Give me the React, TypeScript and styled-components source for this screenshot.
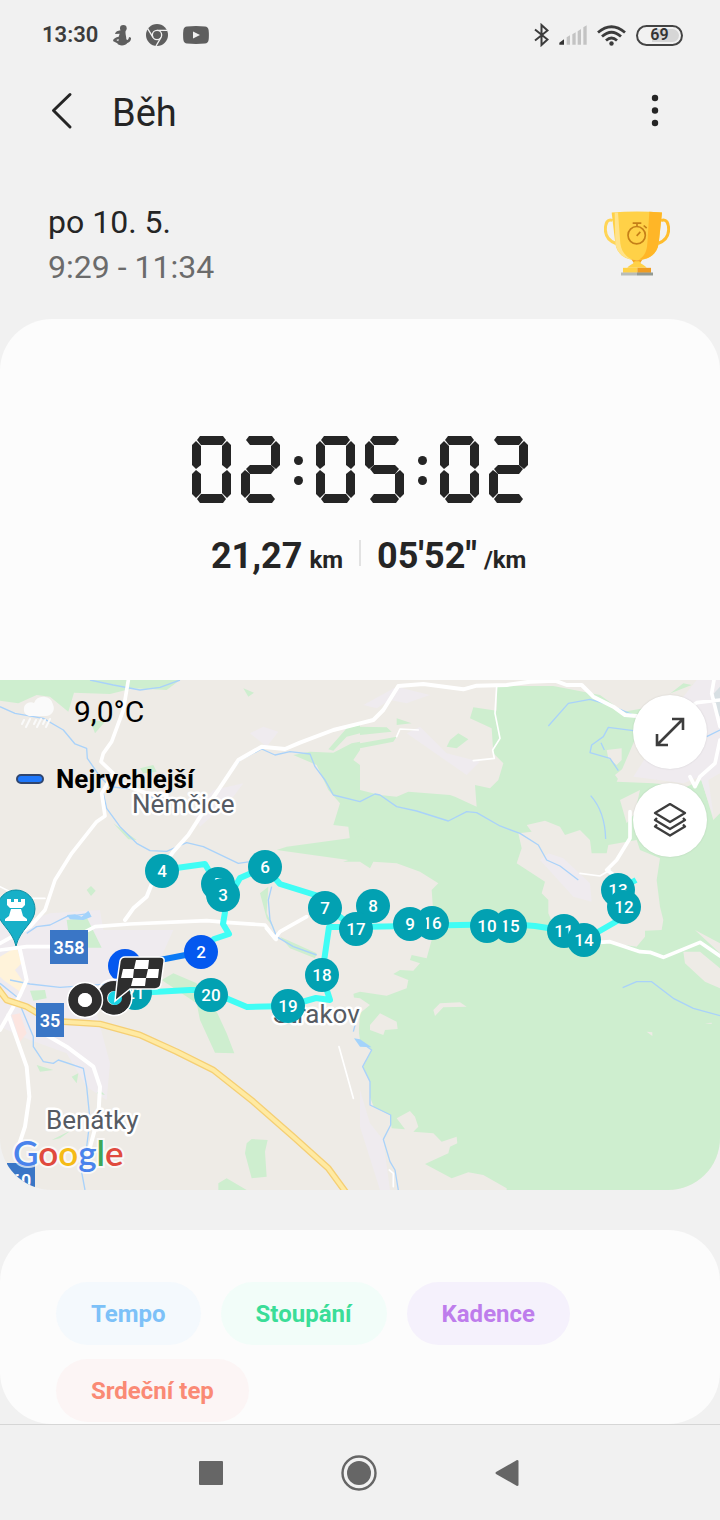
import React from "react";
import styled, { createGlobalStyle } from "styled-components";

const GlobalStyle = createGlobalStyle`
  *, *::before, *::after { box-sizing: border-box; }
  body {
    margin: 0;
    background: #f1f1f1;
    color: #252525;
    font-family: Roboto, "Liberation Sans", sans-serif;
  }
  button { font: inherit; color: inherit; border: 0; padding: 0; cursor: pointer; background: none; }
  svg { display: block; }
`;

const Screen = styled.div`
  min-height: 100vh;
  display: flex;
  flex-direction: column;
`;

/* ---------- status bar ---------- */

const StatusBar = styled.div`
  display: flex;
  align-items: center;
  justify-content: space-between;
  height: 70px;
  padding: 0 37px 0 42px;
`;

const StatusGroup = styled.div<{ $gap: number }>`
  display: flex;
  align-items: center;
  gap: ${(p) => p.$gap}px;
`;

const StatusTime = styled.span`
  font-size: 22px;
  line-height: 28px;
  font-weight: 600;
  color: #3c3c3c;
`;

const Battery = styled.span`
  width: 47px;
  height: 21px;
  border: 2px solid #444;
  border-radius: 11px;
  padding: 2px;
  display: flex;
`;

const BatteryLevel = styled.span`
  flex: 1;
  border-radius: 7px;
  background: linear-gradient(90deg, #f1f1f1 30%, #d6d6d6 30%);
  display: flex;
  align-items: center;
  justify-content: center;
  font-size: 16px;
  line-height: 14px;
  font-weight: 600;
  color: #333;
`;

function AssistantIcon() {
  return (
    <svg width="18" height="21" viewBox="0 0 54 63" fill="#5e5e5e" aria-hidden="true">
      <circle cx="31" cy="10" r="10" />
      <path d="M22 16 38 17C36 25 40 34 40 42C42 48 47 44 48 36L54 38C55 48 48 52 43 54C38 64 15 63 13 55L1 49C-2 43 8 36 17 35L20 26 6 27C7 20 15 17 22 16ZM10 45 16 49 17 42Z" fillRule="evenodd" />
    </svg>
  );
}

function ChromeIcon() {
  return (
    <svg width="22" height="22" viewBox="0 0 66 66" aria-hidden="true">
      <circle cx="33" cy="33" r="33" fill="#5e5e5e" />
      <g fill="none" stroke="#f1f1f1" strokeWidth="4">
        <circle cx="33" cy="33" r="14" />
        <path d="M33 19H64M21 40 5 14M45 40 30 66" />
      </g>
    </svg>
  );
}

function VideoIcon() {
  return (
    <svg width="26" height="18" viewBox="0 0 26 18" aria-hidden="true">
      <path d="M4 0.4Q13-.4 22 .4Q25 .6 25.6 4Q26.2 9 25.6 14Q25 17.4 22 17.6Q13 18.4 4 17.6Q1 17.4.4 14Q-.2 9 .4 4Q1 .6 4 .4Z" fill="#5e5e5e" />
      <path d="M10 5.500 17 9 10 12.500Z" fill="#f1f1f1" />
    </svg>
  );
}

function BluetoothIcon() {
  return (
    <svg width="15" height="24" viewBox="0 0 15 24" fill="none" stroke="#3c3c3c" strokeWidth="2" aria-hidden="true">
      <path d="M1 6.500 13.500 16.500 7.500 22V2L13.500 7.500 1 17.500" />
    </svg>
  );
}

function SignalIcon() {
  return (
    <svg width="28" height="20" viewBox="0 0 84 60" aria-hidden="true">
      <path d="M1 59V53L15 43V59Z" fill="#333" />
      <path d="M23 59V37L33 31V59ZM40 59V28L50 22V59ZM56 59V19L66 12V59ZM73 59V7L83 1V59Z" fill="#c3c3c3" />
    </svg>
  );
}

function WifiIcon() {
  return (
    <svg width="29" height="21" viewBox="0 0 29 21" fill="none" stroke="#3c3c3c" strokeWidth="2.800" aria-hidden="true">
      <path d="M1 7.500Q14.500-4 28 7.500M5 11.500Q14.500 3 24 11.500M9 15.500Q14.500 10.500 20 15.500" />
      <circle cx="14.500" cy="18.500" r="2.200" fill="#3c3c3c" stroke="none" />
    </svg>
  );
}

/* ---------- title bar ---------- */

const TitleBar = styled.header`
  display: flex;
  align-items: center;
  height: 82px;
  padding: 0 48px 0 45px;
`;

const IconButton = styled.button`
  display: flex;
  align-items: center;
  justify-content: center;
  width: 34px;
  height: 44px;
`;

const Title = styled.h1`
  flex: 1;
  margin: 0 0 0 33px;
  padding-top: 4px;
  font-size: 38px;
  line-height: 44px;
  font-weight: 400;
`;

/* ---------- activity summary ---------- */

const Summary = styled.section`
  display: flex;
  align-items: center;
  justify-content: space-between;
  padding: 48px 50px 29px 48px;
`;

const SummaryLine = styled.p<{ $muted?: boolean }>`
  margin: 0;
  font-size: 32px;
  line-height: 45px;
  color: ${(p) => (p.$muted ? "#6b6b6b" : "#252525")};
`;

function Trophy() {
  return (
    <svg width="66" height="68" viewBox="42 47 198 203" role="img" aria-label="Trofej">
      <g fill="none" strokeWidth="9">
        <path d="M68 75C52 68 46 84 46 103C47 126 60 138 78 144" stroke="#ffd557" />
        <path d="M213 75C230 68 236 84 236 103C235 126 222 138 204 144" stroke="#ffbd2d" />
      </g>
      <path d="M65 51Q141 45 216 51L206 144C202 174 178 194 141 194C104 194 80 174 76 144Z" fill="#ffd147" />
      <path d="M74 51 84 51 91 144C94 168 108 184 126 192C98 188 80 170 76 144Z" fill="#ffe38a" />
      <path d="M178 49 216 51 206 144C202 174 178 192 146 193C172 176 171 158 173 130Z" fill="#ffb627" />
      <path d="M124 191Q141 197 158 191L149 205H133Z" fill="#f5a623" />
      <path d="M112 217C118 207 130 207 134 197H148C152 207 164 207 170 217Z" fill="#ffd147" />
      <path d="M99 217H142V232H99Z" fill="#ffd147" />
      <path d="M142 217H183V232H142Z" fill="#ef9c22" />
      <path d="M93 231H141V240H93Z" fill="#b9bdb8" />
      <path d="M141 231H189V240H141Z" fill="#939a93" />
      <g fill="none" stroke="#c57f18" strokeWidth="5">
        <circle cx="140" cy="119" r="26" />
        <path d="M128 83H154M161 90 170 98M140 121 151 109M141 84V92" />
      </g>
    </svg>
  );
}

/* ---------- result card ---------- */

const ResultCard = styled.section`
  background: #fcfcfc;
  border-radius: 52px 52px 0 0;
  padding: 117px 24px 103px;
  display: flex;
  flex-direction: column;
  align-items: stretch;
  gap: 32px;
`;

const Clock = styled.div`
  display: flex;
  justify-content: center;
  gap: 10px;
`;

const Digit = styled.span`
  display: grid;
  width: 39px;
  height: 67px;
`;

const SEGMENTS: Record<string, string> = {
  a: "5px 4px, 8px 0, 31px 0, 34px 4px, 30px 9px, 9px 9px",
  b: "35px 5px, 39px 9px, 39px 29px, 35px 33px, 30px 29px, 30px 10px",
  c: "35px 34px, 39px 38px, 39px 58px, 35px 62px, 30px 57px, 30px 38px",
  d: "9px 58px, 30px 58px, 34px 63px, 31px 67px, 8px 67px, 5px 63px",
  e: "4px 34px, 9px 38px, 9px 57px, 4px 62px, 0 58px, 0 38px",
  f: "4px 5px, 9px 10px, 9px 29px, 4px 33px, 0 29px, 0 9px",
  g: "5px 33px, 9px 29px, 30px 29px, 34px 33px, 30px 38px, 9px 38px",
};

const LIT: Record<string, string> = {
  "0": "abcdef",
  "2": "abged",
  "5": "afgcd",
};

const Segment = styled.span<{ $shape: string }>`
  grid-area: 1 / 1;
  background: #252525;
  clip-path: polygon(${(p) => p.$shape});
`;

const Colon = styled.span`
  width: 16px;
  display: flex;
  flex-direction: column;
  align-items: center;
  justify-content: center;
  gap: 11px;
  padding-top: 1px;
  &::before, &::after {
    content: "";
    width: 9px;
    height: 9px;
    border-radius: 50%;
    background: #252525;
  }
`;

function SegmentClock({ value }: { value: string }) {
  return (
    <Clock role="img" aria-label={value}>
      {value.split("").map((ch, i) =>
        ch === ":" ? (
          <Colon key={i} />
        ) : (
          <Digit key={i}>
            {LIT[ch].split("").map((s) => (
              <Segment key={s} $shape={SEGMENTS[s]} />
            ))}
          </Digit>
        )
      )}
    </Clock>
  );
}

const Stats = styled.div`
  display: grid;
  grid-template-columns: 1fr 2px 1fr;
  column-gap: 16px;
  align-items: start;
`;

const Stat = styled.p<{ $align: "left" | "right" }>`
  margin: 0;
  text-align: ${(p) => p.$align};
  font-size: 36px;
  line-height: 42px;
  font-weight: 700;
`;

const Unit = styled.span`
  margin-left: 7px;
  font-size: 24px;
  line-height: 28px;
`;

const StatDivider = styled.span`
  height: 26px;
  margin-top: 5px;
  background: #e2e2e2;
`;

/* ---------- map ---------- */

const MapCard = styled.section`
  position: relative;
  overflow: hidden;
  border-radius: 0 0 52px 52px;
  background: #eeebe6;
`;

const MapDrawing = styled.svg`
  width: 100%;
  height: auto;
  font-family: Roboto, "Liberation Sans", sans-serif;
`;

const MapInfo = styled.div`
  position: absolute;
  top: 14px;
  left: 16px;
`;

const Weather = styled.div`
  display: flex;
  align-items: center;
  gap: 19px;
  padding-left: 5px;
  font-size: 30px;
  line-height: 36px;
  color: #000;
`;

const Legend = styled.div`
  display: flex;
  align-items: center;
  gap: 12px;
  margin-top: 34px;
  font-size: 26px;
  line-height: 30px;
  font-weight: 700;
  color: #000;
`;

const LegendSwatch = styled.span`
  width: 28px;
  height: 10px;
  border: 2px solid #30466f;
  border-radius: 5px;
  background: #1f78fb;
`;

const MapControls = styled.div`
  position: absolute;
  top: 15px;
  right: 13px;
  display: flex;
  flex-direction: column;
  gap: 14px;
`;

const RoundButton = styled.button`
  width: 74px;
  height: 74px;
  border-radius: 50%;
  background: #fff;
  display: flex;
  align-items: center;
  justify-content: center;
  box-shadow: 0 0 2px rgba(0, 0, 0, 0.12);
`;

const TEAL = "#02a1b2";
const BLUE = "#0458ef";

const MARKERS: { n: number; x: number; y: number; color?: string }[] = [
  { n: 21, x: 135, y: 313 },
  { n: 20, x: 211, y: 315 },
  { n: 19, x: 288, y: 326 },
  { n: 18, x: 322, y: 295 },
  { n: 8, x: 373, y: 226 },
  { n: 17, x: 356, y: 249 },
  { n: 16, x: 432, y: 243 },
  { n: 15, x: 510, y: 246 },
  { n: 13, x: 618, y: 210 },
  { n: 12, x: 624, y: 227 },
  { n: 11, x: 564, y: 251 },
  { n: 14, x: 584, y: 260 },
  { n: 10, x: 487, y: 246 },
  { n: 9, x: 410, y: 244 },
  { n: 7, x: 325, y: 228 },
  { n: 6, x: 265, y: 187 },
  { n: 5, x: 218, y: 204 },
  { n: 4, x: 162, y: 191 },
  { n: 3, x: 223, y: 215 },
  { n: 2, x: 201, y: 272, color: BLUE },
  { n: 1, x: 125, y: 286, color: BLUE },
];

/* Land use, water and roads, drawn on a grid three times finer than the map. */
function Terrain() {
  return (
    <g transform="scale(0.33333)">
      <path
        fill="#efebef"
        d="M0 690 90 720 150 700 300 690 310 750H520L480 840 330 950 290 1000 330 1150 320 1260 260 1220 200 1120 90 1080 0 1040ZM750 160 790 140 835 155 800 200ZM580 400 640 330 730 310 700 350 600 440ZM1090 75 1190 20 1290 45 1220 70 1170 60 1130 85ZM1220 160 1260 140 1340 220 1440 245 1400 285Z"
      />
      <path fill="#fff3da" d="M0 830 50 800 65 850 45 870 80 920 60 935 10 900 0 890Z" />
      <path fill="#fce5e0" d="M35 1005 60 1000 80 1060 60 1085Z" />
      <g fill="#ceeecf">
        <path d="M0 0H540L500 30 400 25 330 42 222 38 205 95 150 50 110 45 55 70 0 62Z" />
        <path d="M730 25 762 38 745 50ZM270 120 315 125 285 160ZM420 265 460 255 470 275 430 280ZM340 430 410 480 385 478ZM260 630 273 618 287 632 273 648ZM200 720 260 712 305 803 265 803 245 760 205 755Z" />
        <path d="M985 208 1040 145 1080 135V160L1040 170 1000 212ZM780 640 805 620 800 700 825 750 800 715Z" />
        <path d="M880 225 930 215 1000 218 1055 190 1080 185V210L1060 240 1080 255V310L1080 330 1140 345 1190 350 1225 335 1350 345 1365 350 1430 380 1425 315 1470 325 1495 300 1510 250 1480 220 1475 145 1410 115 1420 82 1490 92V18H1660L1800 45 1870 95 1960 80 2050 10 2075 15 2160 0V1530H1180L1160 1380 1090 1200 1080 1080 1060 940 1030 735 1030 545 1045 540 1050 480 1045 440 1000 435 1020 370 985 330 950 255Z" />
        <path d="M830 510 860 500 1080 470 1140 500V545L1045 540ZM1190 115 1235 130 1190 135ZM1080 140 1160 142 1175 155 1080 165ZM1080 190 1190 170 1180 185 1080 205ZM1340 200 1350 180 1375 160 1405 178 1370 205Z" />
        <path d="M90 932 135 930 140 955 100 962ZM485 900 520 880 590 910 600 950 650 995 680 1060 703 1120 645 1118 600 1020 590 970ZM840 770 950 820 945 835 870 805ZM740 1390 755 1377 803 1380 795 1415 800 1490 755 1495 735 1420ZM655 1510 680 1495 740 1530H655ZM110 1155 160 1170 120 1175ZM215 1190 235 1180 230 1210ZM155 1380 215 1350 180 1375ZM290 1240 300 1230 315 1245ZM1015 1000 1055 1050 1050 1100 1020 1040Z" />
      </g>
      <g fill="#eeebe6">
        <path d="M1000 545H1080L1110 565 1120 545 1190 550 1260 575 1315 610 1295 630 1300 700 1295 780 1280 835 1235 825 1230 840 1260 850 1240 872 1200 870 1180 882 1225 900 1220 925 1160 947 1080 935 1000 960Z" />
        <path d="M1000 945 1080 955 1110 975 1080 1000 1075 1075 1115 1110 1090 1160 1110 1205 1110 1275 1170 1305 1175 1345 1215 1348 1190 1315 1230 1293 1245 1310 1255 1340 1240 1355 1300 1360 1325 1385 1370 1370 1372 1390 1350 1400 1345 1420 1275 1452 1355 1495 1405 1477 1450 1485 1520 1525V1530H1000Z" />
        <path d="M1580 435 1635 422 1680 440 1695 465 1740 450 1770 480 1775 520 1820 520 1825 495 1910 480 1920 510 1980 535 1970 600 1980 680 1990 720 1985 750 1935 752 1935 770 1910 800 1840 790 1680 780 1645 700V660L1625 640 1635 605 1550 550 1565 505 1555 460 1595 455Z" />
        <path d="M2075 15 2160 0V400L2140 420 2105 300 2060 320 1960 310 1850 305 1900 190 1960 60ZM1820 210 1865 205V240L1850 255 1825 235ZM1845 285 1900 240 1890 280 1860 305ZM1860 360 1920 330 1905 400 1880 430Z" />
        <path d="M2050 815H2100L2160 865V925L2115 905 2055 850ZM2085 750 2160 790V820ZM1110 1035 1140 1000 1190 1025 1193 1047 1155 1050 1150 1065 1110 1050ZM1300 990 1320 970 1380 967 1400 980 1330 982 1305 1008ZM1940 1055 1957 1057V1068ZM2115 1030 2135 1028V1032Z" />
      </g>
      <path
        fill="#efebef"
        d="M2090 0H2160V280L2125 300 2142 415 2120 350 2100 290 2050 310 1900 290 1990 150 2050 50ZM1645 520 1690 535 1770 610 1775 665 1720 650 1620 540ZM1080 1230 1110 1330 1150 1380 1170 1530H1140L1080 1340Z"
      />
      <path fill="#d7dfe3" d="M2142 40 2160 20V110L2145 90Z" />

      <g fill="none" stroke="#a9d2fa" strokeWidth="4" strokeLinejoin="round">
        <path d="M270 0 340 15 420 30 480 22 540 0M0 80 45 100 130 115 190 150 225 192 260 205 262 235 300 290 330 320 420 330 460 355M310 340 320 385 360 440 410 490 450 512 500 514 560 488 610 500 715 550 750 545" />
        <path d="M660 320 720 240 785 207 825 225 870 215 930 222 945 260 975 300 1000 345 1080 365 1125 342 1140 345 1190 380 1250 393 1345 423 1400 395 1430 398 1500 438 1560 460 1615 495 1640 540 1680 558 1735 600" />
        <path d="M1645 138 1705 70 1770 58 1830 75 1900 105M1900 152 1825 142 1810 170 1775 195 1770 218 1830 235 1855 272M1803 188 1813 210M1772 347Q1815 395 1817 477M2120 170 2160 150" />
        <path d="M80 760 110 740 150 735 200 710 270 700M30 900 90 912 180 922 350 910M0 910 50 950 100 1070 100 1100 130 1145 160 1150 175 1140 250 1165 260 1220 270 1320 260 1400 240 1450 255 1530M815 620 805 660 810 720 830 770 880 800 950 825" />
        <path d="M1080 980 1060 1055M1080 1085 1115 1110 1088 1160 1110 1205 1110 1275 1172 1305V1335L1150 1378 1170 1445 1185 1470 1195 1530M1868 923 1910 905H1955L2020 955 2080 985 2160 1007" />
      </g>
      <path fill="#a3d3fb" d="M1062 1075 1080 1078 1115 1102 1080 1100ZM200 705 225 703 245 710 265 692 275 710 250 720 210 718Z" />

      <g fill="none" stroke="#fff" strokeLinejoin="round" strokeLinecap="round">
        <path strokeWidth="11" d="M385 0 370 90 335 185 310 220 303 245 340 280 305 340 315 408 290 425 215 520 165 600 135 690 90 740 0 790" />
        <path strokeWidth="12" d="M360 310 440 340 500 345M375 720 400 685 440 650 460 600 520 515 565 465 620 380 655 330 715 240 785 200 855 207 900 188 1000 150 1080 130 1120 120 1150 90 1195 18 1270 12 1390 28 1430 17 1520 15 1590 5 1665 2 1700 15 1745 15 1780 50 1840 80 1875 105 1910 108" />
        <path strokeWidth="11" d="M0 810 80 800 170 800 285 740 390 732 620 722 690 728 795 735 825 775 840 755 920 710M1890 395V475L1850 540 1820 570 1850 590M2070 290 2085 320 2100 290 2145 250 2160 180M2160 60 2090 68 2050 95M2142 0 2135 40 2160 140M1760 790 1830 785 1920 815 1950 817 1990 832 2100 787 2160 828" />
        <path strokeWidth="12" d="M60 810 80 900 60 945 0 1050M25 1005 80 1160 88 1250 75 1340 55 1400M130 1060 200 1100 280 1160 300 1220 295 1310 265 1420M800 745 828 778" />
        <path strokeWidth="5" d="M1490 20 1485 100 1500 175 1478 210 1483 235 1420 242M1190 170 1200 147 1255 150M1740 580 1800 588 1830 570M0 620 70 655 135 655M1017 1100 1060 1255M1168 1470 1180 1480V1520" />
      </g>
      <g fill="none" strokeLinejoin="round">
        <path stroke="#f5cf74" strokeWidth="20" d="M-10 920 20 960 80 980 130 1010 190 1025 300 1032 420 1065 530 1115 640 1170 760 1265 880 1370 985 1465 1040 1540" />
        <path stroke="#ffeaa2" strokeWidth="12" d="M-10 920 20 960 80 980 130 1010 190 1025 300 1032 420 1065 530 1115 640 1170 760 1265 880 1370 985 1465 1040 1540" />
      </g>
    </g>
  );
}

function RoadShield({ x, y, width, label }: { x: number; y: number; width: number; label: string }) {
  return (
    <g>
      <rect x={x} y={y} width={width} height="34" fill="#3a76c6" />
      <text x={x + width / 2} y={y + 24} textAnchor="middle" fontSize="18" fontWeight="600" fill="#fff">
        {label}
      </text>
    </g>
  );
}

function PlaceName({ x, y, children }: { x: number; y: number; children: string }) {
  return (
    <text x={x} y={y} fontSize="26" fill="#565b63" stroke="#fff" strokeWidth="5" strokeLinejoin="round" paintOrder="stroke">
      {children}
    </text>
  );
}

function RouteMap() {
  return (
    <MapDrawing viewBox="0 0 720 510" role="img" aria-label="Mapa trasy">
      <Terrain />
      <PlaceName x={132} y={133}>Němčice</PlaceName>
      <PlaceName x={273} y={343}>Strakov</PlaceName>
      <PlaceName x={46} y={449}>Benátky</PlaceName>
      <RoadShield x={50} y={250} width={38} label="358" />
      <RoadShield x={36} y={323} width={28} label="35" />
      <path d="M7 483H35V507H7Z" fill="#3a76c6" />
      <text x="21" y="507" textAnchor="middle" fontSize="18" fontWeight="600" fill="#fff">60</text>

      <g stroke="#0d8fa3">
        <path d="M16 266C12 249-3 243-3 229A19 19 0 0 1 35 229C35 243 20 249 16 266Z" fill="#17b0c8" />
      </g>
      <path d="M7 219H11V222H14V219H18V222H21V219H25V225L22 228H10L7 225ZM11 229H21L23 236 27 239V241H5V239L9 236Z" fill="#fff" />

      <g fill="none" stroke="#40fdf5" strokeWidth="6" strokeLinejoin="round">
        <path d="M162 190 205 184 212 196 223 215 225 232 223 244 229 254 214 259 201 272M223 215 232 212 240 198 265 187 280 204 325 218 328 228 340 237 356 249" />
        <path d="M356 247 410 246 510 244 535 246 548 248 584 260 624 237 618 210 636 200M356 247H329L322 295 330 320 316 318 288 326 247 327 228 319 211 310 190 310 135 313" />
      </g>
      <path d="M125 286 165 279 201 272" fill="none" stroke="#0b7af5" strokeWidth="6" />

      {MARKERS.map((m) => (
        <g key={m.n}>
          <circle cx={m.x} cy={m.y} r="17" fill={m.color ?? TEAL} />
          <text x={m.x} y={m.y + 6} textAnchor="middle" fontSize="17" fontWeight="500" fill="#fff">
            {m.n}
          </text>
        </g>
      ))}

      <g fill="none" strokeWidth="10">
        <circle cx="114" cy="318" r="12" stroke="#2e2e2e" />
        <circle cx="85" cy="320" r="12" stroke="#2e2e2e" />
      </g>
      <g fill="none" stroke="#fff" strokeWidth="1.500">
        <path d="M98 309A18 18 0 0 1 132 318A18 18 0 0 1 102 331" />
        <circle cx="85" cy="320" r="17.500" />
      </g>
      <circle cx="85" cy="320" r="7" fill="#fff" />
      <circle cx="115" cy="318" r="7" fill="#19d3e4" />
      <path d="M125 277H160Q165 277 164 282L161 304Q160 309 155 309H130L115 321 117 302 120 281Q121 277 125 277Z" fill="#2e2e2e" stroke="#fff" strokeWidth="1.500" />
      <path d="M136 280H149L148 289H134ZM123 289H134L133 298H121ZM148 289H159L158 298H146ZM133 298H146L145 306H131Z" fill="#fff" />

      <text x="13" y="486" fontFamily="Lato, Roboto, sans-serif" fontSize="35" fontWeight="600" stroke="#fff" strokeWidth="4" strokeOpacity="0.7" paintOrder="stroke">
        <tspan fill="#4a83ec">G</tspan>
        <tspan fill="#e04a3e">o</tspan>
        <tspan fill="#f5bb16">o</tspan>
        <tspan fill="#4a83ec">g</tspan>
        <tspan fill="#3ea757">l</tspan>
        <tspan fill="#e04a3e">e</tspan>
      </text>
    </MapDrawing>
  );
}

function RainIcon() {
  return (
    <svg width="34" height="36" viewBox="0 0 34 36" aria-hidden="true">
      <path d="M8 22A7 7 0 0 1 8 8.500Q11 8 13 9A10 10 0 0 1 32 10.500A8 8 0 0 1 25 22Z" fill="#fafafa" />
      <path d="M3 26 1 30M9 25 5 33M15 26 13 30M20 25 16 33M24 26 22 30M29 25 25 33" stroke="#fafafa" strokeWidth="2" strokeLinecap="round" />
    </svg>
  );
}

/* ---------- charts card ---------- */

const ChartCard = styled.section`
  margin-top: 40px;
  padding: 52px 56px 2px;
  border-radius: 52px;
  background: #fcfcfc;
  display: flex;
  flex-wrap: wrap;
  gap: 14px 20px;
`;

const Chip = styled.button<{ $color: string; $bg: string }>`
  height: 63px;
  padding: 0 35px;
  border-radius: 32px;
  font-size: 24px;
  line-height: 28px;
  font-weight: 700;
  color: ${(p) => p.$color};
  background: ${(p) => p.$bg};
`;

const CHIPS = [
  { label: "Tempo", color: "#7dc1f8", bg: "#f4f9fd" },
  { label: "Stoupání", color: "#3bdd98", bg: "#f2fdf9" },
  { label: "Kadence", color: "#be7dec", bg: "#f5f1fc" },
  { label: "Srdeční tep", color: "#fa8a75", bg: "#fcf5f5" },
];

/* ---------- system navigation ---------- */

const SystemNav = styled.nav`
  margin-top: auto;
  height: 96px;
  padding-right: 3px;
  border-top: 1px solid #d6d6d6;
  display: flex;
  align-items: center;
  justify-content: center;
  gap: 108px;
`;

const NavButton = styled.button`
  width: 40px;
  height: 40px;
  display: flex;
  align-items: center;
  justify-content: center;
`;

export default function App() {
  return (
    <>
      <GlobalStyle />
      <Screen>
        <StatusBar>
          <StatusGroup $gap={15}>
            <StatusTime>13:30</StatusTime>
            <AssistantIcon />
            <ChromeIcon />
            <VideoIcon />
          </StatusGroup>
          <StatusGroup $gap={10}>
            <BluetoothIcon />
            <SignalIcon />
            <WifiIcon />
            <Battery>
              <BatteryLevel>69</BatteryLevel>
            </Battery>
          </StatusGroup>
        </StatusBar>

        <TitleBar>
          <IconButton aria-label="Zpět">
            <svg width="22" height="38" viewBox="0 0 22 38" fill="none" stroke="#252525" strokeWidth="3" strokeLinecap="round" strokeLinejoin="round">
              <path d="M19 2.500 2.500 18.500 19 35" />
            </svg>
          </IconButton>
          <Title>Běh</Title>
          <IconButton aria-label="Další možnosti">
            <svg width="8" height="34" viewBox="0 0 8 34" fill="#252525">
              <circle cx="4" cy="4" r="3.200" />
              <circle cx="4" cy="16.500" r="3.200" />
              <circle cx="4" cy="29" r="3.200" />
            </svg>
          </IconButton>
        </TitleBar>

        <Summary>
          <div>
            <SummaryLine>po 10. 5.</SummaryLine>
            <SummaryLine $muted>9:29 - 11:34</SummaryLine>
          </div>
          <Trophy />
        </Summary>

        <ResultCard>
          <SegmentClock value="02:05:02" />
          <Stats>
            <Stat $align="right">
              21,27<Unit>km</Unit>
            </Stat>
            <StatDivider />
            <Stat $align="left">
              05'52"<Unit>/km</Unit>
            </Stat>
          </Stats>
        </ResultCard>

        <MapCard>
          <RouteMap />
          <MapInfo>
            <Weather>
              <RainIcon />
              9,0°C
            </Weather>
            <Legend>
              <LegendSwatch />
              Nejrychlejší
            </Legend>
          </MapInfo>
          <MapControls>
            <RoundButton aria-label="Zvětšit mapu">
              <svg width="30" height="30" viewBox="0 0 30 30" fill="none" stroke="#3d3d3d" strokeWidth="2.600">
                <path d="M2 28 28 2M17 2H28V13M2 17V28H13" />
              </svg>
            </RoundButton>
            <RoundButton aria-label="Vrstvy mapy">
              <svg width="34" height="34" viewBox="0 0 34 34" fill="none" stroke="#3d3d3d" strokeWidth="2.300" strokeLinejoin="round">
                <path d="M17 1 32 10 17 19 2 10ZM4 15 2 17 17 26 32 17 30 15M4 21.500 2 23.500 17 32.500 32 23.500 30 21.500" />
              </svg>
            </RoundButton>
          </MapControls>
        </MapCard>

        <ChartCard>
          {CHIPS.map((c) => (
            <Chip key={c.label} $color={c.color} $bg={c.bg}>
              {c.label}
            </Chip>
          ))}
        </ChartCard>

        <SystemNav>
          <NavButton aria-label="Poslední aplikace">
            <svg width="24" height="24" viewBox="0 0 24 24">
              <rect width="24" height="24" rx="1" fill="#666" />
            </svg>
          </NavButton>
          <NavButton aria-label="Domů">
            <svg width="36" height="36" viewBox="0 0 36 36">
              <circle cx="18" cy="18" r="16.500" fill="none" stroke="#666" strokeWidth="2.400" />
              <circle cx="18" cy="18" r="12" fill="#666" />
            </svg>
          </NavButton>
          <NavButton aria-label="Zpět">
            <svg width="24" height="26" viewBox="0 0 24 26">
              <path d="M1 12Q0 13 1 14L22 26Q23.500 26 23.500 25V1Q23.500 0 22 0Z" fill="#666" />
            </svg>
          </NavButton>
        </SystemNav>
      </Screen>
    </>
  );
}
